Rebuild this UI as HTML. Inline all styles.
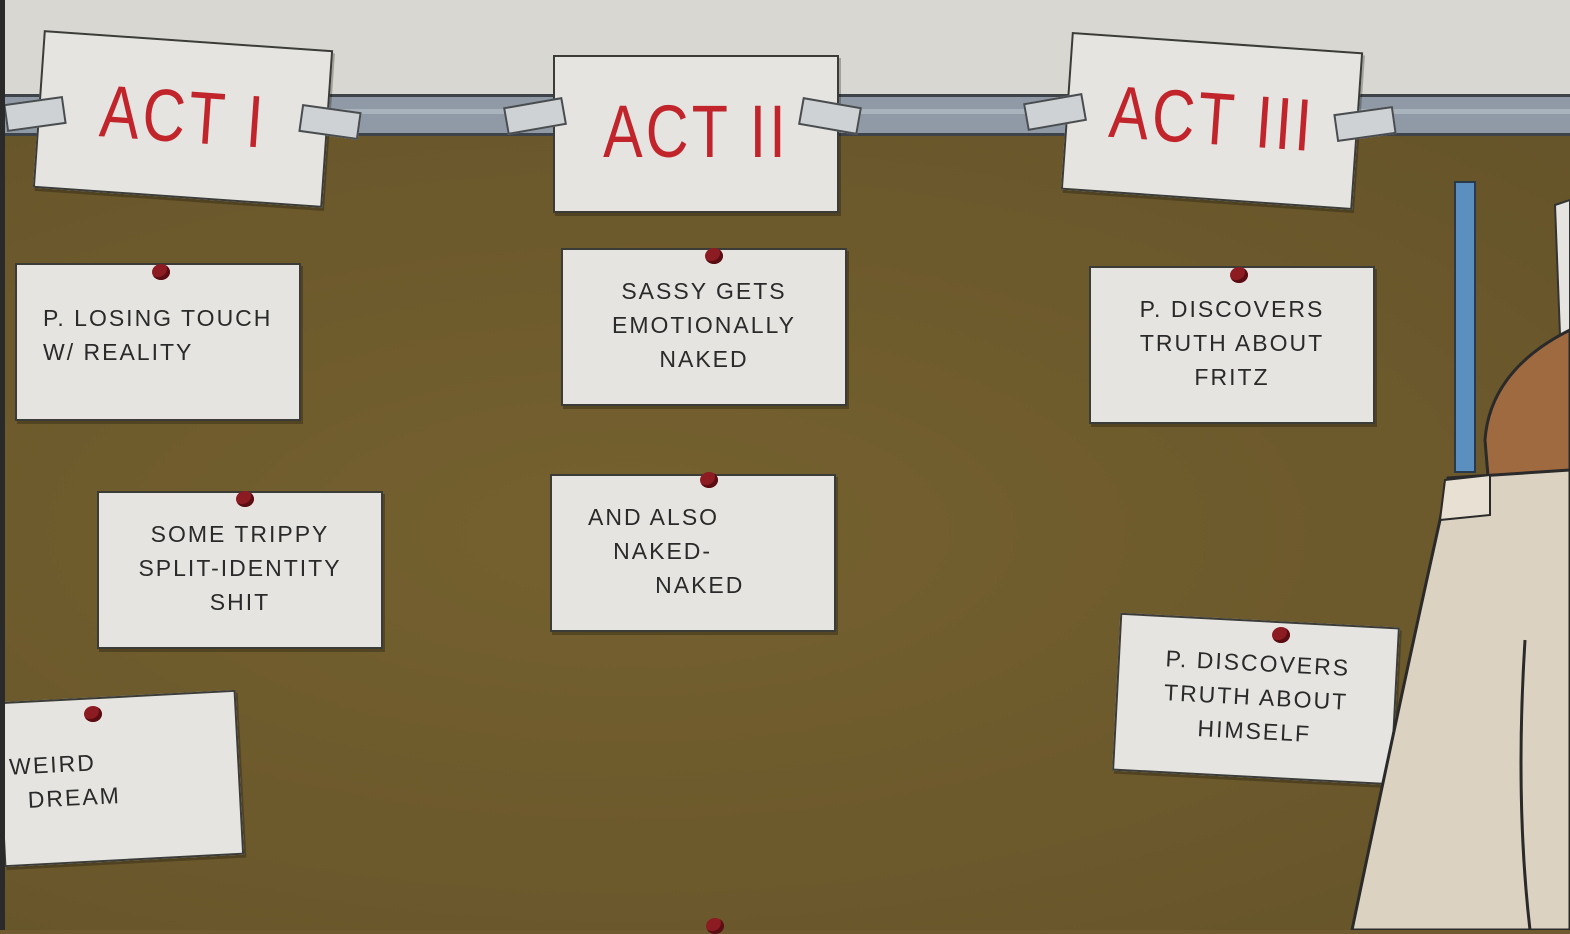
<!DOCTYPE html>
<html><head><meta charset="utf-8">
<style>
html,body{margin:0;padding:0}
body{width:1570px;height:930px;overflow:hidden;position:relative;background:#6f5b2f;font-family:"Liberation Sans",sans-serif}
.wall{position:absolute;left:0;top:0;width:1570px;height:140px;background:#d9d7d1}
.rail{position:absolute;left:0;top:94px;width:1570px;height:42px;background:#8f9aa6;border-top:3px solid #3e434a;border-bottom:3px solid #3e434a;box-sizing:border-box}
.rail:after{content:"";position:absolute;left:0;right:0;top:12px;height:5px;background:#a9b3bd}
.board{position:absolute;left:0;top:136px;width:1570px;height:794px;background:radial-gradient(ellipse at 40% 50%,#75612f,#66542a)}
.edge{position:absolute;left:0;top:0;width:5px;height:930px;background:#2a2a2a}
.card{position:absolute;background:#e5e4e0;border:2px solid #3b3b38;box-sizing:border-box;color:#2a2a2a;text-align:center;letter-spacing:2px;text-transform:uppercase;box-shadow:2px 3px 0 rgba(0,0,0,.25)}
.act{color:#c1252b;font-size:74px;letter-spacing:4px;line-height:150px;transform:scaleX(.8)}
.n{font-size:23px;line-height:34px;padding-top:24px}
.pin{position:absolute;width:18px;height:16px;border-radius:50%;background:#8d1b22;box-shadow:inset -3px -3px 0 #5a0d12}
.tape{position:absolute;width:60px;height:28px;background:#cfd2d4;border:2px solid #4a4d50;box-sizing:border-box}
</style></head><body>
<div class="wall"></div>
<div class="rail"></div>
<div class="board"></div>

<div class="card" style="left:38px;top:40px;width:290px;height:158px;transform:rotate(4deg)"><div class="act">ACT I</div></div>
<div class="card" style="left:553px;top:55px;width:286px;height:158px"><div class="act">ACT II</div></div>
<div class="card" style="left:1066px;top:42px;width:292px;height:158px;transform:rotate(4deg)"><div class="act">ACT III</div></div>

<div class="tape" style="left:5px;top:100px;transform:rotate(-8deg)"></div>
<div class="tape" style="left:300px;top:108px;transform:rotate(8deg)"></div>
<div class="tape" style="left:505px;top:102px;transform:rotate(-10deg)"></div>
<div class="tape" style="left:800px;top:102px;transform:rotate(10deg)"></div>
<div class="tape" style="left:1025px;top:98px;transform:rotate(-10deg)"></div>
<div class="tape" style="left:1335px;top:110px;transform:rotate(-8deg)"></div>

<div class="card n" style="left:15px;top:263px;width:286px;height:158px;text-align:left;padding-left:26px;padding-top:36px;white-space:nowrap">P. Losing Touch<br>w/ Reality</div>
<div class="card n" style="left:97px;top:491px;width:286px;height:158px">Some Trippy<br>Split-Identity<br>Shit</div>
<div class="card n" style="left:0px;top:696px;width:240px;height:165px;transform:rotate(-3deg);text-align:left;padding-left:8px;padding-top:46px">Weird<br>&nbsp;&nbsp;Dream</div>
<div class="card n" style="left:561px;top:248px;width:286px;height:158px">Sassy Gets<br>Emotionally<br>Naked</div>
<div class="card n" style="left:550px;top:474px;width:286px;height:158px;text-align:left;padding-left:36px">And Also<br>&nbsp;&nbsp;&nbsp;Naked-<br>&nbsp;&nbsp;&nbsp;&nbsp;&nbsp;&nbsp;&nbsp;&nbsp;Naked</div>
<div class="card n" style="left:1089px;top:266px;width:286px;height:158px">P. Discovers<br>Truth About<br>Fritz</div>
<div class="card n" style="left:1116px;top:620px;width:280px;height:158px;transform:rotate(3deg)">P. Discovers<br>Truth About<br>Himself</div>

<div class="pin" style="left:152px;top:264px"></div>
<div class="pin" style="left:236px;top:491px"></div>
<div class="pin" style="left:84px;top:706px"></div>
<div class="pin" style="left:705px;top:248px"></div>
<div class="pin" style="left:700px;top:472px"></div>
<div class="pin" style="left:1230px;top:267px"></div>
<div class="pin" style="left:1272px;top:627px"></div>
<div class="pin" style="left:706px;top:918px"></div>

<svg style="position:absolute;left:0;top:0" width="1570" height="930">
<rect x="1455" y="182" width="20" height="290" fill="#5a8fc0" stroke="#2a3a4a" stroke-width="2"/>
<path d="M1555 205 L1570 200 L1570 340 L1560 335 Z" fill="#e5e4e0" stroke="#333" stroke-width="2"/>
<path d="M1485 440 Q1490 370 1570 330 L1570 520 L1490 500 Z" fill="#a06a40" stroke="#2a2a2a" stroke-width="3"/>
<path d="M1448 478 L1570 470 L1570 930 L1352 930 Q1400 700 1440 520 Z" fill="#dcd2c2" stroke="#2a2a2a" stroke-width="3"/>
<path d="M1445 480 L1490 475 L1490 515 L1440 520 Z" fill="#e8e0d2" stroke="#2a2a2a" stroke-width="2"/>
<path d="M1525 640 Q1515 800 1530 930" fill="none" stroke="#2a2a2a" stroke-width="3"/>
</svg>
<div class="edge"></div>
</body></html>
